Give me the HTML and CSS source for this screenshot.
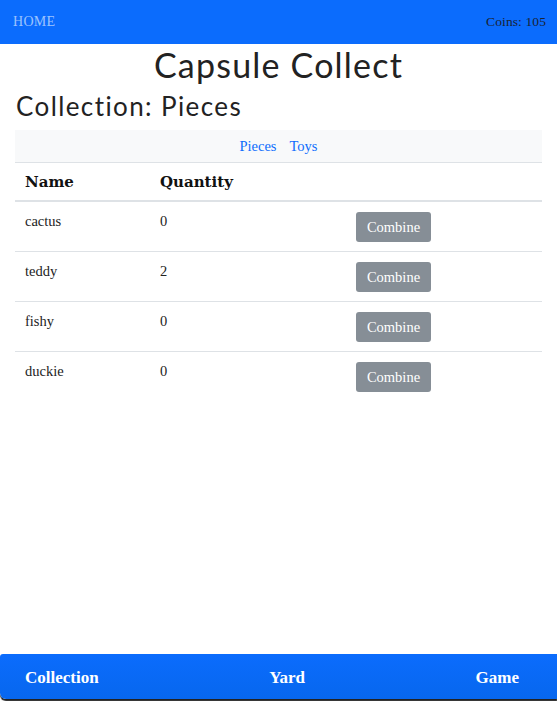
FILE: index.html
```html
<!DOCTYPE html>
<html>
<head>
<meta charset="utf-8">
<link rel="stylesheet" href="styles.css">
</head>
<body>
<nav class="topbar">
  <a class="home">HOME</a>
  <span class="coins">Coins: 105</span>
</nav>
<main class="content">
  <h1 class="title">Capsule Collect</h1>
  <h2 class="subtitle">Collection: Pieces</h2>
  <div class="subnav">
    <a class="sublink">Pieces</a>
    <a class="sublink">Toys</a>
  </div>
  <table class="table">
    <thead>
      <tr><th class="c-name">Name</th><th class="c-qty">Quantity</th><th class="c-act"></th></tr>
    </thead>
    <tbody>
      <tr><td>cactus</td><td>0</td><td><button class="btn">Combine</button></td></tr>
      <tr><td>teddy</td><td>2</td><td><button class="btn">Combine</button></td></tr>
      <tr><td>fishy</td><td>0</td><td><button class="btn">Combine</button></td></tr>
      <tr class="last"><td>duckie</td><td>0</td><td><button class="btn">Combine</button></td></tr>
    </tbody>
  </table>
</main>
<footer class="bottombar">
  <a class="tab">Collection</a>
  <a class="tab">Yard</a>
  <a class="tab">Game</a>
</footer>
</body>
</html>
```

FILE: styles.css
```css
html, body {
  margin: 0;
  padding: 0;
  height: 100%;
}
body {
  font-family: "Liberation Serif", serif;
  color: #212529;
  background: #fff;
  display: flex;
  flex-direction: column;
}
.topbar {
  height: 44px;
  background: #0b6cfd;
  display: flex;
  align-items: center;
  justify-content: space-between;
  padding: 0 11px 0 13px;
  flex: none;
}
.home {
  font-size: 14px;
  color: rgba(255,255,255,0.6);
  letter-spacing: 0.3px;
}
.coins {
  font-size: 13.5px;
  color: #1a2233;
  letter-spacing: 0.1px;
}
.content {
  flex: 1;
  padding: 0 15px;
}
.title {
  font-family: "Lato", sans-serif;
  font-weight: 400;
  font-size: 34px;
  line-height: 40px;
  letter-spacing: 1.2px;
  margin: 1px 0 0;
  text-align: center;
  color: #222;
}
.subtitle {
  font-family: "Lato", sans-serif;
  font-weight: 400;
  font-size: 26px;
  line-height: 32px;
  letter-spacing: 1.4px;
  margin: 5px 0 8px 1px;
  color: #222;
}
.subnav {
  height: 32px;
  background: #f8f9fa;
  border-bottom: 1px solid #dee2e6;
  display: flex;
  justify-content: center;
  align-items: center;
  gap: 13px;
}
.sublink {
  color: #0d6efd;
  font-size: 14.5px;
}
.table {
  width: 100%;
  border-collapse: collapse;
}
.table th {
  font-family: "DejaVu Serif", serif;
  font-weight: 700;
  font-size: 15px;
  text-align: left;
  height: 37px;
  padding: 0 10px;
  border-bottom: 2px solid #dee2e6;
  color: #111;
}
.c-name { width: 115px; }
.c-qty { width: 176px; }
.table td {
  font-size: 14.5px;
  vertical-align: top;
  padding: 11px 10px 0;
  height: 38px;
  border-bottom: 1px solid #dee2e6;
  color: #222;
}
.table tr.last td {
  border-bottom: none;
}
.table td:last-child {
  padding-top: 10px;
}
.btn {
  font-family: "Liberation Serif", serif;
  font-size: 14.5px;
  color: #fff;
  background: #868e96;
  border: none;
  border-radius: 3px;
  width: 75px;
  height: 30px;
  padding: 0;
}
.bottombar {
  flex: none;
  box-sizing: border-box;
  height: 45px;
  margin-bottom: 2px;
  background: linear-gradient(#0b6cfd, #0767ee);
  border-radius: 3px 0 0 6px;
  box-shadow: 0 2px 1px #222;
  display: flex;
  justify-content: space-between;
  align-items: center;
  padding: 3px 38px 0 25px;
}
.tab {
  color: #fff;
  font-size: 17px;
  font-weight: 700;
}
```
